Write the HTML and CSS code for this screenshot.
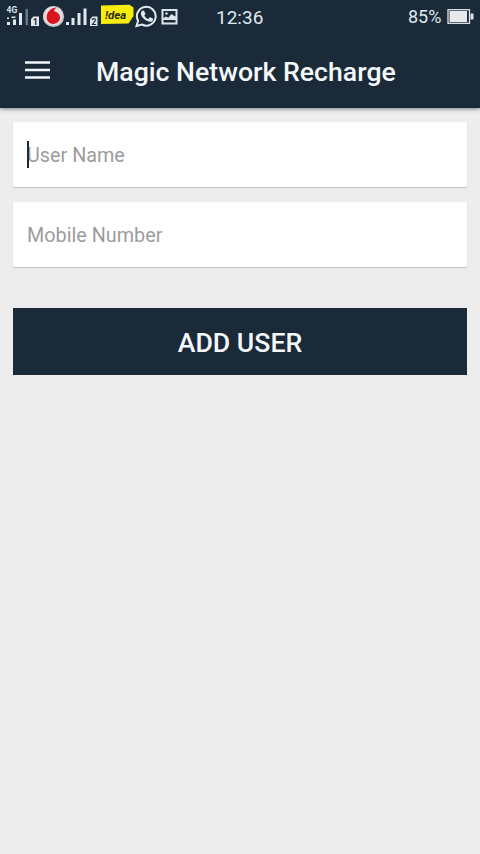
FILE: index.html
```html
<!DOCTYPE html>
<html lang="en">
<head>
<meta charset="utf-8">
<title>Magic Network Recharge</title>
<link rel="stylesheet" href="styles.css">
</head>
<body>
<header class="top">
  <div class="status">
    <div class="status-icons">
      <svg class="signal-one" width="42" height="34" viewBox="0 0 42 34">
        <text class="network" x="6.500" y="13">4G</text>
        <path fill="#dfe8ee" d="M7 22h3v3H7zM7 17.500h2v1.500H7zM13 19.500h3V25h-3zM11.500 16.500h4v1.500h-4zM19 13h3v12h-3z"/>
        <path fill="#68798a" d="M25.500 9h2.500v16h-2.500z"/>
        <path fill="#dfe8ee" d="M31 19l2.500-2.500H39V26h-8z"/>
        <text class="sim" x="32.700" y="25">1</text>
      </svg>
      <svg width="23" height="34" viewBox="42 0 23 34">
        <circle cx="53.500" cy="16.500" r="10.600" fill="#c9c8cc"/>
        <circle cx="53.200" cy="16" r="9.300" fill="#e2dfe2"/>
        <path fill="#d9141c" d="M57 7.500c-2 .8-2.800 2.200-2.900 3.700 3.500.8 5.900 3 5.900 6.400 0 3.600-3 6.300-6.700 6.300-3.900 0-6.600-2.900-6.600-6.700 0-5.100 4-9.700 10.300-9.700z"/>
      </svg>
      <svg class="signal-two" width="36" height="34" viewBox="65 0 36 34">
        <path fill="#dfe8ee" d="M66 22h3v3h-3zM71.500 18h3v7h-3zM77.500 13h3v12h-3zM83.500 8.500h3V25h-3zM90 19l2.500-2.500h5V26H90z"/>
        <text class="sim" x="91.300" y="25">2</text>
      </svg>
      <svg width="34" height="34" viewBox="101 0 34 34">
        <path fill="#f8ed0a" d="M101 5.500l28.500-.8 4 2.800v8.500l-5 7.500-27.500.5z"/>
        <text class="idea" x="105" y="18.500">!dea</text>
      </svg>
      <svg width="24" height="34" viewBox="135 0 24 34">
        <path fill="none" stroke="#e3eaef" stroke-width="2" d="M136.500 26l1.600-5.200a9.400 9.400 0 1 1 3.800 3.700z"/>
        <path fill="#e3eaef" d="M141.700 11.300c1-1.300 2.200-1 2.600-.1l1 2.200c.2.500-.1 1-1 2 .9 1.800 2.200 2.900 4 3.600l1.200-1.400c.4-.4.800-.3 1.200-.1l2 1c.8.400.4 2-.6 2.700-1.400 1-3.500.7-5.900-.6-2.700-1.500-4.700-4-5.200-6.100-.3-1.300 0-2.400.7-3.200z"/>
      </svg>
      <svg width="22" height="34" viewBox="159 0 22 34">
        <rect x="162.500" y="10" width="14" height="13.500" fill="none" stroke="#dde5ea" stroke-width="2"/>
        <path fill="#dde5ea" d="M163 18.500l3-2 2.300 1.200 3.200-3.700 2 1.500 3.500 1.500V20h-14z"/>
        <circle cx="166.500" cy="13.500" r="1.200" fill="#dde5ea"/>
      </svg>
    </div>
    <time class="clock">12:36</time>
    <div class="battery">
      <span>85%</span>
      <svg width="28" height="34" viewBox="446 0 28 34">
        <rect x="448" y="9.700" width="21.500" height="13.600" fill="none" stroke="#dce4e9" stroke-width="1.300"/>
        <path fill="#e8e9e9" d="M449.500 11h17.500v11h-17.500z"/>
        <path fill="#dce4e9" d="M470.500 13.500h3v6h-3z"/>
      </svg>
    </div>
  </div>
  <div class="toolbar">
    <button class="menu" aria-label="Menu">
      <svg width="26" height="20" viewBox="0 0 26 20"><path fill="#f4f8fb" d="M1 1.200h25v2.600H1zM1 8.700h25v2.600H1zM1 16.200h25v2.600H1z"/></svg>
    </button>
    <h1>Magic Network Recharge</h1>
  </div>
</header>
<main class="form">
  <div class="field"><span>User Name</span><i class="caret"></i></div>
  <div class="field"><span>Mobile Number</span></div>
  <button class="submit">ADD USER</button>
</main>
</body>
</html>
```
FILE: styles.css
```css
* { box-sizing: border-box; }
body {
  margin: 0;
  min-height: 854px;
  background: #ededed;
  font-family: Roboto, sans-serif;
}
svg { display: block; flex: none; }
button { border: 0; padding: 0; background: none; font-family: inherit; }
.top {
  height: 108px;
  background: #1b2a39;
  color: #f4f8fb;
  box-shadow: 0 1px 4px rgba(20, 35, 45, .55);
}
.status { display: flex; height: 34px; color: #dfe8ee; }
.status-icons { display: flex; width: 216px; }
.network { font: 700 8.5px Roboto, sans-serif; fill: #dfe8ee; }
.sim { font: 700 9px Roboto, sans-serif; fill: #1b2a39; }
.idea { font: italic 700 11.5px Roboto, sans-serif; fill: #29290a; }
.clock { width: 192px; font-size: 19px; line-height: 35px; }
.battery { display: flex; font-size: 18px; line-height: 33px; }
.battery span { width: 38px; }
.toolbar { display: flex; height: 74px; }
.menu { width: 96px; height: 74px; padding: 26px 0 0 24px; }
.menu svg { margin-bottom: 28px; }
h1 { margin: 0; font-size: 26.67px; font-weight: 500; line-height: 77px; white-space: nowrap; }
.form { display: flex; flex-direction: column; padding: 14px 13px; }
.field {
  position: relative;
  height: 65px;
  margin-bottom: 15px;
  padding-left: 14px;
  background: #fff;
  box-shadow: 0 1px 1px #c5c6c7;
  color: #9c9c9c;
  font-size: 19.8px;
  line-height: 67px;
}
.caret { position: absolute; left: 14px; top: 19px; width: 2px; height: 27px; background: #1b2a39; }
.submit {
  height: 67px;
  margin-top: 26px;
  padding-top: 4px;
  background: #1b2a39;
  color: #f4f8fb;
  font-size: 26.67px;
  font-weight: 500;
  line-height: 63px;
}
```
